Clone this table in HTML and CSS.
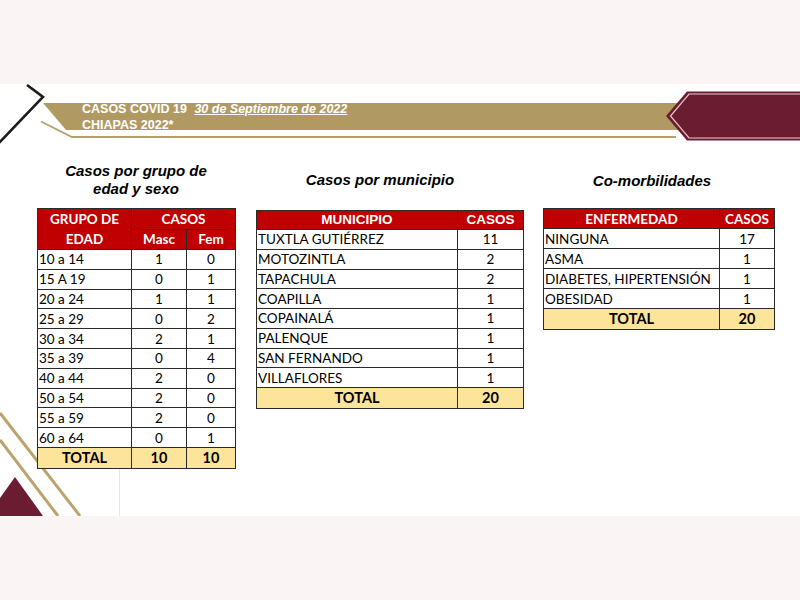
FILE: index.html
```html
<!DOCTYPE html>
<html lang="es">
<head>
<meta charset="utf-8">
<title>Casos COVID 19 Chiapas</title>
<link rel="stylesheet" href="styles.css">
</head>
<body>
<div class="topbar"></div>
<div class="slide">
  <svg class="deco" width="800" height="432" viewBox="0 0 800 432" xmlns="http://www.w3.org/2000/svg">
    <polyline points="27,1 43,13 -2,60" fill="none" stroke="#1c1c1c" stroke-width="2.6"/>
    <polygon points="43,19 700,19 700,46 66,46" fill="#b09a62"/>
    <polyline points="41,37.5 72,53 676,53" fill="none" stroke="#b3a06c" stroke-width="1.8"/>
    <polygon points="666,32 687,7.5 800,7.5 800,56.5 687,56.5" fill="#6b1c31"/>
    <polyline points="800,10 689,10 670.5,32 689,54 800,54" fill="none" stroke="#e9c9cc" stroke-width="1.2"/>
    <line x1="0" y1="329" x2="80" y2="432" stroke="#b8a46c" stroke-width="3"/>
    <line x1="0" y1="356" x2="58" y2="432" stroke="#b8a46c" stroke-width="3"/>
    <polygon points="15,393 43,432 -13,432" fill="#6b1c31"/>
    <line x1="119.5" y1="384" x2="119.5" y2="432" stroke="#e6e6e6" stroke-width="1"/>
  </svg>
  <header class="head">
    <div>CASOS COVID 19 <span class="date">30 de Septiembre de 2022</span></div>
    <div>CHIAPAS 2022*</div>
  </header>
  <main class="cols">
    <section class="col c1">
      <h2 class="title">Casos por grupo de<br>edad y sexo</h2>
      <table class="tbl edad">
        <colgroup><col class="w94"><col class="w55"><col class="w49"></colgroup>
        <tr><th rowspan="2" class="hdr2">GRUPO DE<br>EDAD</th><th colspan="2">CASOS</th></tr>
        <tr><th>Masc</th><th>Fem</th></tr>
        <tr><td>10 a 14</td><td class="n">1</td><td class="n">0</td></tr>
        <tr><td>15 A 19</td><td class="n">0</td><td class="n">1</td></tr>
        <tr><td>20 a 24</td><td class="n">1</td><td class="n">1</td></tr>
        <tr><td>25 a 29</td><td class="n">0</td><td class="n">2</td></tr>
        <tr><td>30 a 34</td><td class="n">2</td><td class="n">1</td></tr>
        <tr><td>35 a 39</td><td class="n">0</td><td class="n">4</td></tr>
        <tr><td>40 a 44</td><td class="n">2</td><td class="n">0</td></tr>
        <tr><td>50 a 54</td><td class="n">2</td><td class="n">0</td></tr>
        <tr><td>55 a 59</td><td class="n">2</td><td class="n">0</td></tr>
        <tr><td>60 a 64</td><td class="n">0</td><td class="n">1</td></tr>
        <tr class="tot"><td class="n">TOTAL</td><td class="n">10</td><td class="n">10</td></tr>
      </table>
    </section>
    <section class="col c2">
      <h2 class="title">Casos por municipio</h2>
      <table class="tbl mun">
        <colgroup><col class="w201"><col class="w66"></colgroup>
        <tr><th class="arial">MUNICIPIO</th><th class="arial">CASOS</th></tr>
        <tr><td>TUXTLA GUTIÉRREZ</td><td class="n">11</td></tr>
        <tr><td>MOTOZINTLA</td><td class="n">2</td></tr>
        <tr><td>TAPACHULA</td><td class="n">2</td></tr>
        <tr><td>COAPILLA</td><td class="n">1</td></tr>
        <tr><td>COPAINALÁ</td><td class="n">1</td></tr>
        <tr><td>PALENQUE</td><td class="n">1</td></tr>
        <tr><td>SAN FERNANDO</td><td class="n">1</td></tr>
        <tr><td>VILLAFLORES</td><td class="n">1</td></tr>
        <tr class="tot"><td class="n">TOTAL</td><td class="n">20</td></tr>
      </table>
    </section>
    <section class="col c3">
      <h2 class="title">Co-morbilidades</h2>
      <table class="tbl">
        <colgroup><col class="w176"><col class="w55"></colgroup>
        <tr><th>ENFERMEDAD</th><th>CASOS</th></tr>
        <tr><td>NINGUNA</td><td class="n">17</td></tr>
        <tr><td>ASMA</td><td class="n">1</td></tr>
        <tr><td>DIABETES, HIPERTENSIÓN</td><td class="n">1</td></tr>
        <tr><td>OBESIDAD</td><td class="n">1</td></tr>
        <tr class="tot"><td class="n">TOTAL</td><td class="n">20</td></tr>
      </table>
    </section>
  </main>
</div>
</body>
</html>
```
FILE: styles.css
```css
html, body {
  margin: 0;
  padding: 0;
}
body {
  background: #faf4f5;
  width: 800px;
  height: 600px;
  overflow: hidden;
}
.topbar {
  height: 84px;
}
.slide {
  position: relative;
  height: 432px;
  background: #ffffff;
}
.deco {
  position: absolute;
  left: 0;
  top: 0;
}
.head {
  position: relative;
  height: 56px;
  box-sizing: border-box;
  padding: 17px 0 0 82px;
  font: bold 12.5px/16px "Liberation Sans", Arial, sans-serif;
  color: #ffffff;
}
.date {
  font-style: italic;
  text-decoration: underline;
  margin-left: 4px;
}
.cols {
  position: relative;
  display: flex;
  align-items: flex-start;
  padding-left: 37px;
}
.col {
  display: flex;
  flex-direction: column;
}
.c1 { width: 198px; margin-right: 21px; }
.c2 { width: 267px; margin-right: 20px; }
.c3 { width: 231px; }
.title {
  margin: 0;
  font: italic bold 15px/18px "Liberation Sans", Arial, sans-serif;
  color: #000000;
  text-align: center;
}
.c1 .title { padding-top: 22px; margin-bottom: 10px; }
.c2 .title { padding-top: 31px; margin-bottom: 21px; padding-right: 19px; }
.c3 .title { padding-top: 32px; margin-bottom: 18px; padding-right: 13px; }
.tbl {
  width: 100%;
  border-collapse: collapse;
  table-layout: fixed;
  background: #ffffff;
  font: 13.5px/18px Lato, "Liberation Sans", sans-serif;
  color: #000000;
}
.w94 { width: 94px; }
.w55 { width: 55px; }
.w49 { width: 49px; }
.w201 { width: 201px; }
.w66 { width: 66px; }
.w176 { width: 176px; }
.tbl th,
.tbl td {
  border: 1px solid #2a2a2a;
  height: 20px;
  box-sizing: border-box;
  padding: 0 1px;
  white-space: nowrap;
  overflow: hidden;
}
.tbl th {
  background: #c00000;
  color: #ffffff;
  font-weight: bold;
  text-align: center;
}
.tbl th.hdr2 {
  line-height: 20px;
}
.tbl th.arial {
  font-family: "Liberation Sans", Arial, sans-serif;
  font-size: 13.5px;
  height: 19px;
}
.edad td {
  height: 19.8px;
}
.mun td {
  height: 19.75px;
}
.tbl td.n {
  text-align: center;
}
.tbl tr.tot td {
  background: #fde49b;
  font-weight: bold;
  font-size: 14.5px;
  height: 21px;
}
```
